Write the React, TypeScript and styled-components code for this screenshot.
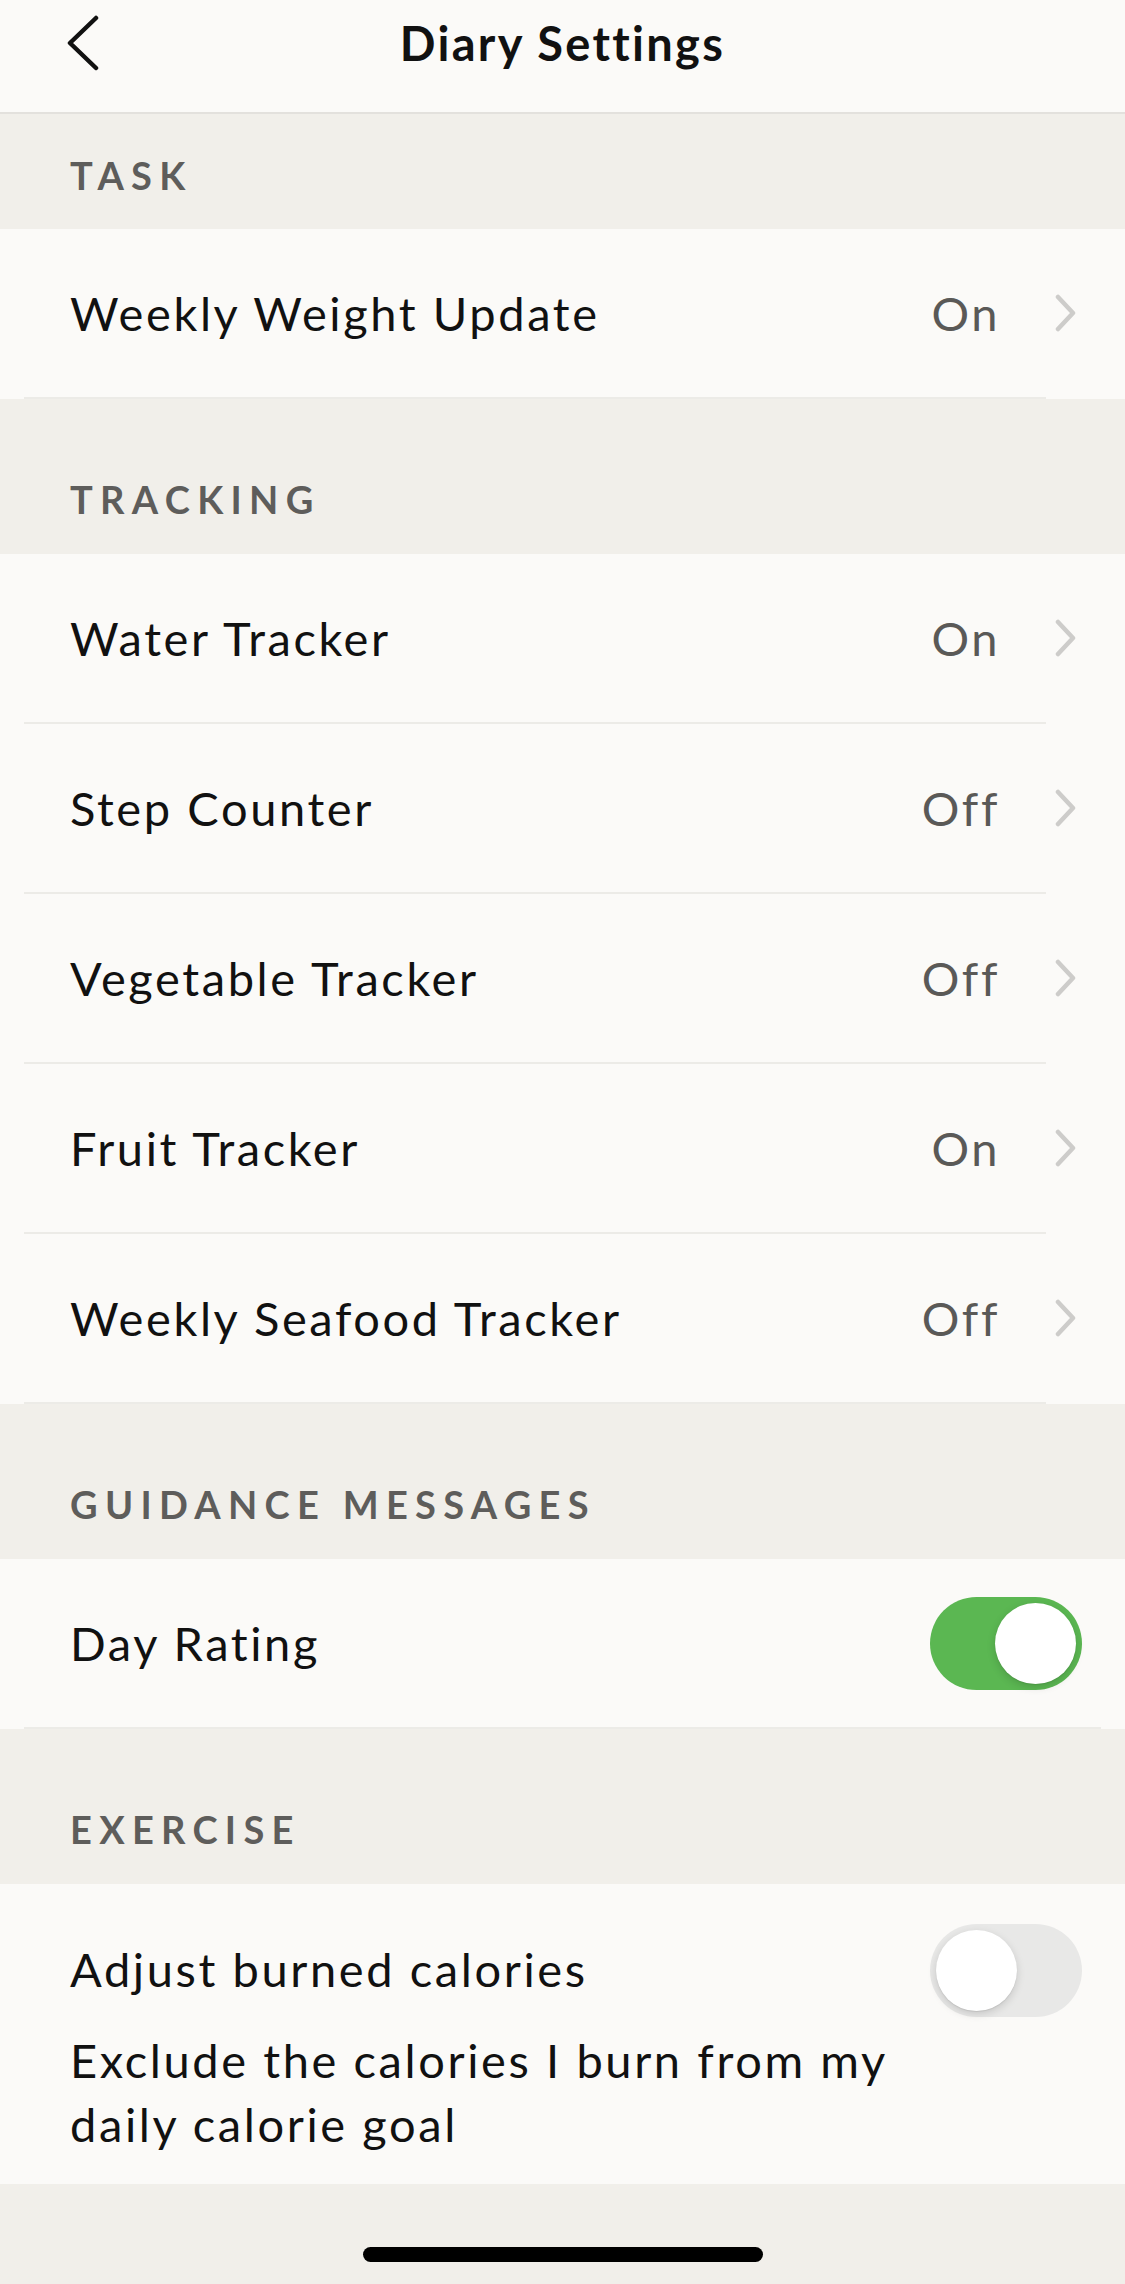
import styled, {createGlobalStyle} from "styled-components";

const GlobalStyle = createGlobalStyle`
  html, body {
    margin: 0;
    padding: 0;
    background: #f1efea;
  }
  body {
    font-family: Lato, "Open Sans", sans-serif;
    color: #111;
  }
`

type Item = { label: string, value: string }

const tracking: Item[] = [
    {label: 'Water Tracker', value: 'On'},
    {label: 'Step Counter', value: 'Off'},
    {label: 'Vegetable Tracker', value: 'Off'},
    {label: 'Fruit Tracker', value: 'On'},
    {label: 'Weekly Seafood Tracker', value: 'Off'},
]

const BackIcon = () => (
    <svg width="40" height="56" viewBox="0 0 40 56" fill="none">
        <polyline points="30,3 4,28 30,53" stroke="#111" strokeWidth="4.5" strokeLinecap="round" strokeLinejoin="round"/>
    </svg>
)

const Chevron = () => (
    <svg width="24" height="38" viewBox="0 0 24 38" fill="none">
        <polyline points="4,3 19,19 4,35" stroke="#cdccca" strokeWidth="4.5" strokeLinecap="round" strokeLinejoin="round"/>
    </svg>
)

const LinkRow = ({label, value}: Item) => (
    <>
        <Row>
            <RowLabel>{label}</RowLabel>
            <RowValue>{value}</RowValue>
            <ChevronWrap><Chevron/></ChevronWrap>
        </Row>
        <Divider/>
    </>
)

const App = () => {
    return (
        <Page>
            <GlobalStyle/>
            <NavBar>
                <BackButton><BackIcon/></BackButton>
                <NavTitle>Diary Settings</NavTitle>
                <span/>
            </NavBar>

            <SectionHeader $first>TASK</SectionHeader>
            <LinkRow label="Weekly Weight Update" value="On"/>

            <SectionHeader>TRACKING</SectionHeader>
            {tracking.map(t => <LinkRow key={t.label} {...t}/>)}

            <SectionHeader>GUIDANCE MESSAGES</SectionHeader>
            <Row>
                <RowLabel>Day Rating</RowLabel>
                <Toggle $on><Knob/></Toggle>
            </Row>
            <Divider $wide/>

            <SectionHeader>EXERCISE</SectionHeader>
            <TallRow>
                <TextColumn>
                    <RowLabel>Adjust burned calories</RowLabel>
                    <SubText>Exclude the calories I burn from my daily calorie goal</SubText>
                </TextColumn>
                <Toggle><Knob/></Toggle>
            </TallRow>

            <Footer>
                <HomeIndicator/>
            </Footer>
        </Page>
    );
};

const Page = styled.div`
  width: 1125px;
  min-height: 2284px;
  display: flex;
  flex-direction: column;
  background: #f1efea;
`
const NavBar = styled.div`
  box-sizing: border-box;
  height: 114px;
  background: #fbfaf8;
  border-bottom: 2px solid #e3e1dd;
  display: grid;
  grid-template-columns: 1fr auto 1fr;
  align-items: center;
  padding-bottom: 26px;
`
const BackButton = styled.button`
  border: none;
  background: none;
  padding: 0 0 0 66px;
  display: flex;
  align-items: center;
  justify-self: start;
  cursor: pointer;
`
const NavTitle = styled.div`
  font-size: 47px;
  font-weight: 700;
  color: #111;
  letter-spacing: 2.3px;
`
const SectionHeader = styled.div<{ $first?: boolean }>`
  box-sizing: border-box;
  height: ${({$first}) => $first ? '115px' : '155px'};
  padding: ${({$first}) => $first ? '41px' : '80px'} 70px 0;
  font-size: 38px;
  line-height: 40px;
  font-weight: 700;
  letter-spacing: 7.3px;
  color: #5e5d5b;
  background: #f1efea;
`
const Row = styled.div`
  height: 168px;
  display: flex;
  align-items: center;
  padding: 0 43px 0 70px;
  background: #fbfaf8;
`
const RowLabel = styled.div`
  flex: 1;
  font-size: 47px;
  line-height: 57px;
  letter-spacing: 2.6px;
  color: #111;
`
const RowValue = styled.div`
  font-size: 47px;
  letter-spacing: 2.6px;
  color: #5a5957;
  margin-right: 54px;
`
const ChevronWrap = styled.div`
  display: flex;
  margin-right: 4px;
`
const Divider = styled.div<{ $wide?: boolean }>`
  height: 2px;
  background: #fbfaf8;
  padding: 0 ${({$wide}) => $wide ? '24px' : '79px'} 0 24px;
  &::before {
    content: "";
    display: block;
    height: 2px;
    background: #ecebe7;
  }
`
const TallRow = styled.div`
  display: flex;
  align-items: flex-start;
  padding: 40px 43px 28px 70px;
  background: #fbfaf8;
`
const TextColumn = styled.div`
  flex: 1;
  padding-top: 17px;
  padding-right: 8px;
`
const SubText = styled.div`
  font-size: 47px;
  line-height: 64px;
  letter-spacing: 2.6px;
  color: #111;
  margin-top: 30px;
`
const Toggle = styled.div<{ $on?: boolean }>`
  box-sizing: border-box;
  width: 152px;
  height: 93px;
  border-radius: 47px;
  padding: 6px;
  display: flex;
  justify-content: ${({$on}) => $on ? 'flex-end' : 'flex-start'};
  background: ${({$on}) => $on ? '#5bb752' : '#e8e8e7'};
  flex-shrink: 0;
`
const Knob = styled.div`
  width: 81px;
  height: 81px;
  border-radius: 50%;
  background: #fff;
  box-shadow: 0 3px 8px rgba(0, 0, 0, 0.15), 0 1px 1px rgba(0, 0, 0, 0.08);
`
const Footer = styled.div`
  flex: 1;
  display: flex;
  justify-content: center;
  padding-top: 63px;
`
const HomeIndicator = styled.div`
  width: 400px;
  height: 15px;
  border-radius: 8px;
  background: #000;
`

export default App;
